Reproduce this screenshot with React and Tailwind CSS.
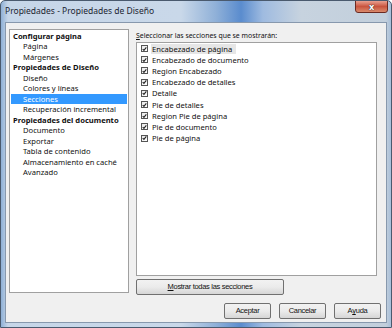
import React from "react";

const tree = [
  { t: "Configurar página", b: true },
  { t: "Página" },
  { t: "Márgenes" },
  { t: "Propiedades de Diseño", b: true },
  { t: "Diseño" },
  { t: "Colores y líneas" },
  { t: "Secciones", sel: true },
  { t: "Recuperación incremental" },
  { t: "Propiedades del documento", b: true },
  { t: "Documento" },
  { t: "Exportar" },
  { t: "Tabla de contenido" },
  { t: "Almacenamiento en caché" },
  { t: "Avanzado" },
];

const sections = [
  "Encabezado de página",
  "Encabezado de documento",
  "Region Encabezado",
  "Encabezado de detalles",
  "Detalle",
  "Pie de detalles",
  "Region Pie de página",
  "Pie de documento",
  "Pie de página",
];

function Check() {
  return (
    <span className="w-[7px] h-[7px] border border-[#555] bg-gradient-to-br from-[#e8e8e8] to-white flex items-center justify-center shrink-0">
      <svg width="6" height="6" viewBox="0 0 6 6">
        <path d="M0.8 3 L2.3 4.6 L5.2 1" fill="none" stroke="#222" strokeWidth="1.3" />
      </svg>
    </span>
  );
}

function Btn({ children, w }) {
  return (
    <div
      className={`${w} h-[16px] border border-[#707070] rounded-[2px] bg-gradient-to-b from-[#f2f2f2] via-[#ebebeb] to-[#d6d6d6] flex items-center justify-center text-[7.5px] tracking-[-0.3px] text-[#111]`}
      style={{ fontFamily: '"Liberation Sans", Arial, sans-serif' }}
    >
      {children}
    </div>
  );
}

export default function App() {
  return (
    <div
      className="w-[392px] h-[328px] rounded-t-[5px] border border-[#4a5a6e] flex flex-col overflow-hidden"
      style={{
        fontFamily: '"Noto Sans", "Open Sans", sans-serif',
        background:
          "linear-gradient(90deg, #8fb0d6 0px, #c6d6e8 7px, #c9d8e9 180px, #8fb0d8 215px, #5a8cce 240px, #9fbbe0 262px, #c7d3df 300px, #c2cfdc 385px, #9db8d8 392px)",
      }}
    >
      <div className="h-[21px] flex items-center pl-[4px] relative shrink-0">
        <span className="text-[8.5px] text-[#1b2430]">Propiedades - Propiedades de Diseño</span>
        <div className="absolute right-[3px] top-[-1px] w-[33px] h-[13px] rounded-b-[3px] border border-[#6b2a22] bg-gradient-to-b from-[#e8a090] via-[#c9543e] to-[#d98a6c] flex items-center justify-center">
          <span className="text-white font-bold text-[9px] leading-none" style={{ textShadow: "0 0 1px #333, 0 0 1px #333" }}>
            x
          </span>
        </div>
      </div>
      <div className="mx-[4px] h-[301px] border border-[#8798ad] bg-[#f0f0f0] flex flex-col">
        <div className="flex pt-[6px] pl-[3px]">
          <div className="w-[120px] h-[264px] border border-[#a0a0a0] bg-white text-[7.6px] leading-[10.5px] text-[#111] pt-[0.5px] px-[1px]">
            {tree.map((it) => (
              <div
                key={it.t}
                className={`${it.b ? "font-bold pl-[2px]" : "pl-[12px]"} ${it.sel ? "bg-[#3399ff] text-white" : ""} h-[10.5px] whitespace-nowrap`}
              >
                {it.t}
              </div>
            ))}
          </div>
          <div className="ml-[7px] w-[241px] flex flex-col">
            <div className="h-[13px] text-[6.9px] leading-[13px] text-[#111] whitespace-nowrap">
              <span className="underline">S</span>eleccionar las secciones que se mostrarán:
            </div>
            <div className="h-[234px] border border-[#a0a0a0] bg-white text-[7.6px] text-[#111] pl-[4px]">
              {sections.map((s, i) => (
                <div key={s} className="h-[11.2px] flex items-center gap-[3px]">
                  <Check />
                  <span className={`${i === 0 ? "bg-[#e6e6e6]" : ""} px-[1px] leading-[10px] whitespace-nowrap ${i === 0 ? "pr-[4px]" : ""}`}>
                    {s}
                  </span>
                </div>
              ))}
            </div>
            <div className="mt-[3px]">
              <Btn w="w-[148px] h-[14px]">
                <span className="underline">M</span>ostrar todas las secciones
              </Btn>
            </div>
          </div>
        </div>
        <div className="flex justify-end gap-[8px] pr-[5px] mt-[8px]">
          <Btn w="w-[47px]">Aceptar</Btn>
          <Btn w="w-[47px]">Cancelar</Btn>
          <Btn w="w-[47px]">
            A<span className="underline">y</span>uda
          </Btn>
        </div>
      </div>
    </div>
  );
}
